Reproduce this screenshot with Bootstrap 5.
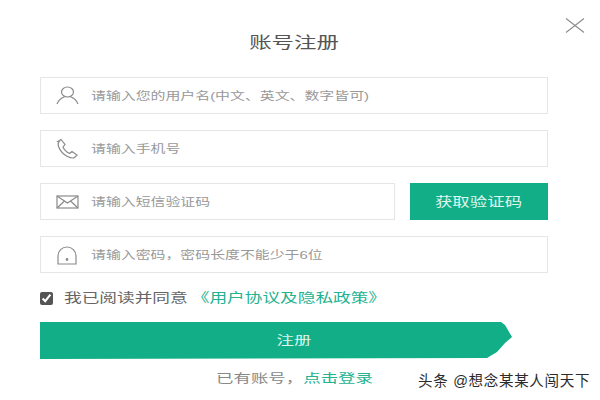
<!DOCTYPE html>
<html lang="zh">
<head>
<meta charset="utf-8">
<title>账号注册</title>
<link href="https://cdn.jsdelivr.net/npm/bootstrap@5.3.0/dist/css/bootstrap.min.css" rel="stylesheet">
<style>
html,body{width:600px;height:400px;overflow:hidden;background:#fff}
body{font-family:"Liberation Sans","Noto Sans CJK SC",sans-serif;position:relative}
.reg-wrap{width:508px;margin-left:40px;padding-top:33px}
.reg-wide{display:inline-block;white-space:nowrap;transform-origin:center center}
.reg-left{transform-origin:left center}
.reg-title{font-size:16px;line-height:20px;color:#555;text-align:center;margin:0 0 24px;font-weight:400}
.reg-title .reg-wide{transform:scaleX(1.4)}
.reg-close{position:absolute;left:565px;top:13px;width:20px;height:15px;padding:0;border:0;background:none;display:block}
.reg-field{height:37px;border:1px solid #e6e6e6;background:#fff;padding-left:15px;gap:11px;font-size:11.5px}
.reg-field svg{flex:none;width:24px;height:22px;stroke:#8a8a8a;fill:none;stroke-width:1.2}
.reg-ph{color:#999;padding-top:2px;transform:scaleX(1.295)}
.reg-stack{gap:16px}
.reg-code{gap:15px}
.reg-code .reg-field{width:355px}
.reg-get{width:138px;height:37px;background:#12ae87;color:#dff5ee;font-size:13px;border:0;border-radius:0;padding:0}
.reg-get .reg-wide{transform:scaleX(1.34)}
.reg-agree{font-size:12.8px;color:#666;height:18px;margin-top:16px;margin-bottom:15px;gap:11px}
.reg-agree input{width:13px;height:13px;margin:0;accent-color:#555}
.reg-agree .reg-wide{transform:scaleX(1.38)}
.reg-link{color:#24b28f;text-decoration:none}
.reg-agree .reg-link{margin-left:3px}
.reg-submit{display:block;width:472px;height:37px;background:#12ae87;color:#dff5ee;font-size:12px;border:0;border-radius:0;padding:0 0 0 37px;text-align:center;clip-path:polygon(0 0,461px 0,465px 3px,472px 15px,465px 21px,457px 30px,447px 36px,0 37px)}
.reg-submit .reg-wide{transform:scaleX(1.45)}
.reg-foot-row{padding-left:176px;margin-top:11px;font-size:12.5px;line-height:18px;color:#888}
.reg-foot-row .reg-wide{transform:scaleX(1.395)}
.reg-mark{position:absolute;left:418px;top:372px;font-size:14.5px;line-height:18px;color:#2b2b2b;white-space:nowrap;letter-spacing:.7px}
</style>
</head>
<body>
<button class="reg-close" aria-label="关闭" type="button">
<svg width="20" height="15" viewBox="0 0 20 15"><path d="M1 .5 19 14.5M19 .5 1 14.5" stroke="#8c8c8c" stroke-width="1.1" fill="none"/></svg>
</button>
<main class="reg-wrap">
<h1 class="reg-title"><span class="reg-wide">账号注册</span></h1>
<form class="d-flex flex-column reg-stack">
<div class="reg-field d-flex align-items-center">
<svg viewBox="0 0 24 22"><ellipse cx="11.5" cy="7" rx="6" ry="5"/><path d="M1 19c1.500-4 4.500-6 7.500-7.200M22 19c-1.500-4-4.500-6-7.500-7.200"/></svg>
<span class="reg-ph reg-wide reg-left">请输入您的用户名(中文、英文、数字皆可)</span>
</div>
<div class="reg-field d-flex align-items-center">
<svg viewBox="0 0 24 22"><path d="M2 3.500 5 1.500l4 5-2 2.500c1 2.500 3.500 5 6.500 6.500l2.500-2 5 3.500-2.500 2.500c-1.500 1-4 .5-7-1-4-2-7.500-6-9-10-.5-2-.5-4 .5-5Z"/></svg>
<span class="reg-ph reg-wide reg-left">请输入手机号</span>
</div>
<div class="d-flex reg-code">
<div class="reg-field d-flex align-items-center">
<svg viewBox="0 0 24 22"><rect x="1" y="5" width="21" height="12"/><path d="M1 5 11.500 12 22 5M1 17 8.500 10M22 17 14.500 10"/></svg>
<span class="reg-ph reg-wide reg-left">请输入短信验证码</span>
</div>
<button type="button" class="reg-get btn"><span class="reg-wide">获取验证码</span></button>
</div>
<div class="reg-field d-flex align-items-center">
<svg viewBox="0 0 24 22"><path d="M2 20V12a9 9 0 0 1 18 0v8Z"/><circle cx="11" cy="15.500" r=".8" fill="#8a8a8a"/></svg>
<span class="reg-ph reg-wide reg-left">请输入密码，密码长度不能少于6位</span>
</div>
</form>
<div class="reg-agree d-flex align-items-center">
<input type="checkbox" checked aria-label="同意">
<span class="reg-wide reg-left">我已阅读并同意<a class="reg-link" href="#">《用户协议及隐私政策》</a></span>
</div>
<button type="button" class="reg-submit btn"><span class="reg-wide">注册</span></button>
<div class="reg-foot-row"><span class="reg-wide reg-left">已有账号，<a class="reg-link" href="#">点击登录</a></span></div>
</main>
<div class="reg-mark">头条 @想念某某人闯天下</div>
<script src="https://cdn.jsdelivr.net/npm/bootstrap@5.3.0/dist/js/bootstrap.bundle.min.js"></script>
</body>
</html>
